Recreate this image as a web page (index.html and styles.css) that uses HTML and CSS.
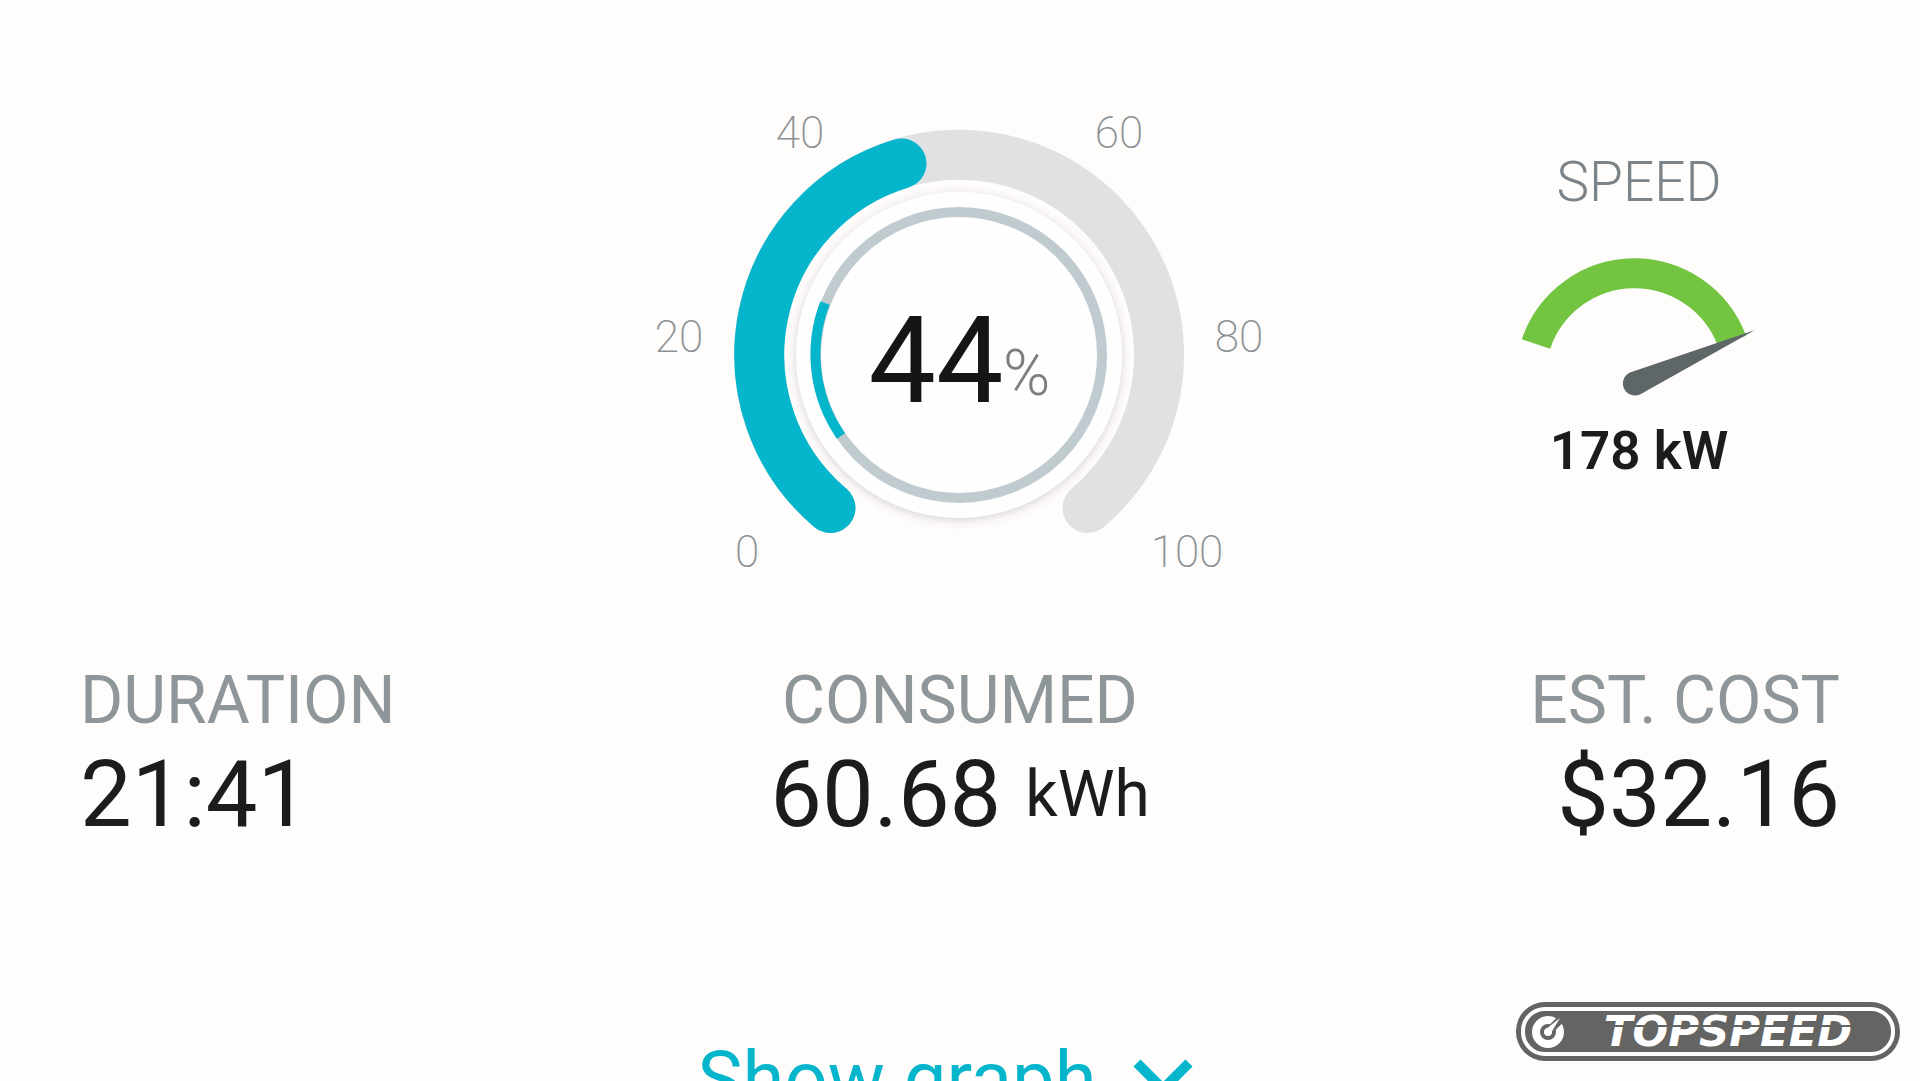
FILE: index.html
```html
<!DOCTYPE html>
<html lang="en">
<head>
<meta charset="utf-8">
<title>Charging session</title>
<link rel="stylesheet" href="styles.css">
</head>
<body>
<main class="session">
  <section class="dials">
    <svg class="gauge" viewBox="0 0 640 500" role="img" aria-label="Battery 44%">
      <defs>
        <filter id="lift" x="-20%" y="-20%" width="140%" height="140%">
          <feDropShadow dx="0" dy="2" stdDeviation="5" flood-color="#5a4a50" flood-opacity="0.25"/>
        </filter>
      </defs>
      <circle class="disc" cx="319" cy="265" r="163" filter="url(#lift)"/>
      <path class="track" d="M190.500 418A200 200 0 1 1 447.500 418"/>
      <path class="level" d="M190.500 418A200 200 0 0 1 261.500 73.500"/>
      <circle class="ring" cx="319" cy="265" r="143"/>
      <path class="ring-part" d="M201 346A143 143 0 0 1 185 213"/>
      <g class="tick">
        <text x="107" y="477">0</text>
        <text x="39" y="262">20</text>
        <text x="160" y="58">40</text>
        <text x="479" y="58">60</text>
        <text x="599" y="262">80</text>
        <text x="547" y="477">100</text>
      </g>
      <text class="percent" x="296" y="312">44</text>
      <text class="percent-sign" x="363" y="305">%</text>
    </svg>
    <div class="speed">
      <span class="speed-label">SPEED</span>
      <svg class="speed-dial" viewBox="0 0 250 156" aria-hidden="true">
        <path class="speed-arc" d="M22 94A104 104 0 0 1 218 91"/>
        <path class="needle" d="M241 80L116 122.500A12 12 0 1 0 126 144.500Z"/>
      </svg>
      <span class="speed-value">178 kW</span>
    </div>
  </section>

  <dl class="stats">
    <div class="stat">
      <dt>DURATION</dt>
      <dd>21:41</dd>
    </div>
    <div class="stat stat-center">
      <dt>CONSUMED</dt>
      <dd>60.68 <span class="unit">kWh</span></dd>
    </div>
    <div class="stat stat-end">
      <dt>EST. COST</dt>
      <dd>$32.16</dd>
    </div>
  </dl>

  <button class="show-graph" type="button">
    Show graph
    <svg class="chevron" viewBox="0 0 60 40" aria-hidden="true"><path d="M4 4L30 30L56 4"/></svg>
  </button>
</main>

<svg class="brand" viewBox="0 0 384 59" role="img" aria-label="TopSpeed">
  <rect class="brand-fill" width="384" height="59" rx="29"/>
  <rect class="brand-line" x="7" y="7" width="370" height="45" rx="22"/>
  <circle class="brand-dial" cx="32" cy="30" r="12"/>
  <path class="brand-cut" d="M32 30L48 14"/>
  <circle class="brand-hub" cx="32" cy="30" r="4"/>
  <path class="brand-hub" d="M30 27L44 16L35 31Z"/>
  <text class="brand-name" x="212" y="44">TOPSPEED</text>
  <rect class="brand-fill" x="60" y="23" width="304" height="2"/>
</svg>
</body>
</html>
```
FILE: styles.css
```css
* {
  box-sizing: border-box;
}

body {
  margin: 0;
  height: 100vh;
  overflow: hidden;
  position: relative;
  background: #fefdfc;
  color: #1b1c1c;
  font-family: Roboto, "Liberation Sans", sans-serif;
}

.session {
  display: flex;
  flex-direction: column;
  padding: 90px 80px 0;
}

.dials {
  display: grid;
  grid-template-columns: 1fr 640px 1fr;
  align-items: start;
}

.gauge {
  grid-column: 2;
  width: 640px;
  height: 500px;
}

.disc {
  fill: #fffefe;
}

.track,
.level {
  fill: none;
  stroke: #dfe1e3;
  stroke-width: 50;
  stroke-linecap: round;
}

.level {
  stroke: #04b5cc;
}

.ring,
.ring-part {
  fill: none;
  stroke: #c0cbd0;
  stroke-width: 10;
}

.ring-part {
  stroke: #04b5cc;
}

.tick {
  fill: #8b9093;
  font-size: 44px;
  font-weight: 200;
  text-anchor: middle;
}

.percent {
  fill: #141515;
  font-size: 120px;
  text-anchor: middle;
}

.percent-sign {
  fill: #7c7f81;
  font-size: 64px;
  font-weight: 300;
}

.speed {
  display: flex;
  flex-direction: column;
  align-items: center;
  justify-self: end;
  margin: 60px 76px 0 0;
  line-height: 64px;
}

.speed-label {
  color: #7c8388;
  font-size: 55px;
  font-weight: 300;
}

.speed-dial {
  width: 250px;
  height: 156px;
  margin: 36px 0 13px;
}

.speed-arc {
  fill: none;
  stroke: #72c441;
  stroke-width: 30;
}

.needle {
  fill: #5e6667;
}

.speed-value {
  font-size: 53px;
  font-weight: 600;
}

.stats {
  display: grid;
  grid-template-columns: repeat(3, 1fr);
  margin: 73px 0 0;
}

.stat {
  display: flex;
  flex-direction: column;
}

.stat-center {
  align-items: center;
}

.stat-end {
  align-items: flex-end;
}

.stat dt {
  color: #8e969a;
  font-size: 66px;
  line-height: 76px;
}

.stat dd {
  display: flex;
  align-items: center;
  gap: 24px;
  margin: 0;
  font-size: 92px;
  line-height: 112px;
}

.unit {
  font-size: 64px;
}

.show-graph {
  display: flex;
  align-items: center;
  gap: 36px;
  align-self: center;
  margin: 183px 30px 0 0;
  padding: 0;
  border: 0;
  background: none;
  color: #04b5cc;
  font: inherit;
  font-size: 76px;
  line-height: 90px;
  cursor: pointer;
}

.chevron {
  width: 60px;
  height: 40px;
}

.chevron path {
  fill: none;
  stroke: currentColor;
  stroke-width: 10;
}

.brand {
  position: absolute;
  right: 20px;
  bottom: 20px;
  width: 384px;
  height: 59px;
}

.brand-fill {
  fill: #646462;
}

.brand-line {
  fill: none;
  stroke: #ffffff;
  stroke-width: 4;
}

.brand-dial {
  fill: none;
  stroke: #ffffff;
  stroke-width: 8;
}

.brand-cut {
  stroke: #646462;
  stroke-width: 8;
}

.brand-hub,
.brand-name {
  fill: #ffffff;
}

.brand-name {
  font-family: "DejaVu Sans", sans-serif;
  font-size: 42px;
  font-style: italic;
  font-weight: 700;
  text-anchor: middle;
}
```
